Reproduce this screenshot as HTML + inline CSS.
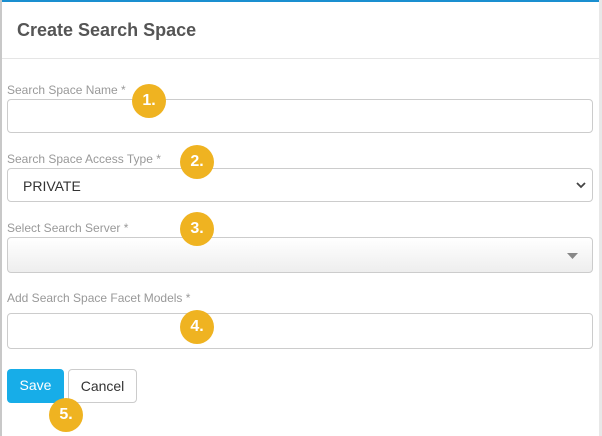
<!DOCTYPE html><html><head><style>
body{margin:0;width:602px;height:436px;overflow:hidden;background:#fff;font-family:"Liberation Sans",sans-serif;position:relative}
.edge{position:absolute;left:0;top:0;width:2px;height:436px;background:#c8c8c8}
.top{position:absolute;left:0;top:0;width:602px;height:2px;background:#1a8fd0}
.rt{position:absolute;right:0;top:0;width:3px;height:436px;background:#e8e8e8}
h1{position:absolute;left:17px;top:20px;margin:0;font-size:18px;font-weight:bold;color:#555}
.hr{position:absolute;left:2px;right:3px;top:58px;height:1px;background:#e5e5e5}
.l{position:absolute;left:7px;font-size:12px;color:#999}
.in{position:absolute;left:7px;width:586px;border:1px solid #ccc;border-radius:4px;box-sizing:border-box;background:#fff}
.b{position:absolute;width:34px;height:34px;border-radius:50%;background:#efb321;color:#fff;font-weight:bold;font-size:16px;text-align:center;line-height:34px}
.btn{position:absolute;top:369px;height:34px;border-radius:4px;box-sizing:border-box;font-size:14px;text-align:center;line-height:32px}
</style></head><body>
<div class="top"></div><div class="edge"></div><div class="rt"></div>
<h1>Create Search Space</h1><div class="hr"></div>
<div class="l" style="top:83px">Search Space Name *</div>
<div class="in" style="top:99px;height:34px"></div>
<div class="l" style="top:152px">Search Space Access Type *</div>
<div class="in" style="top:168px;height:34px;font-size:14px;color:#333;padding:9px 15px">PRIVATE
<svg style="position:absolute;right:6px;top:13px" width="10" height="7" viewBox="0 0 10 7"><path d="M1 1l4 4 4-4" stroke="#444" stroke-width="1.8" fill="none"/></svg></div>
<div class="l" style="top:221px">Select Search Server *</div>
<div class="in" style="top:237px;height:36px;background:linear-gradient(#fff,#eee)">
<svg style="position:absolute;right:14px;top:15px" width="11" height="6"><path d="M0 0h11L5.5 6z" fill="#888"/></svg></div>
<div class="l" style="top:291px">Add Search Space Facet Models *</div>
<div class="in" style="top:313px;height:36px"></div>
<div class="btn" style="left:7px;width:57px;background:#17ade8;color:#fff">Save</div>
<div class="btn" style="left:68px;width:69px;border:1px solid #ccc;color:#333">Cancel</div>
<div class="b" style="left:132px;top:84px">1.</div>
<div class="b" style="left:180px;top:145px">2.</div>
<div class="b" style="left:180px;top:212px">3.</div>
<div class="b" style="left:180px;top:310px">4.</div>
<div class="b" style="left:49px;top:398px">5.</div>
</body></html>
